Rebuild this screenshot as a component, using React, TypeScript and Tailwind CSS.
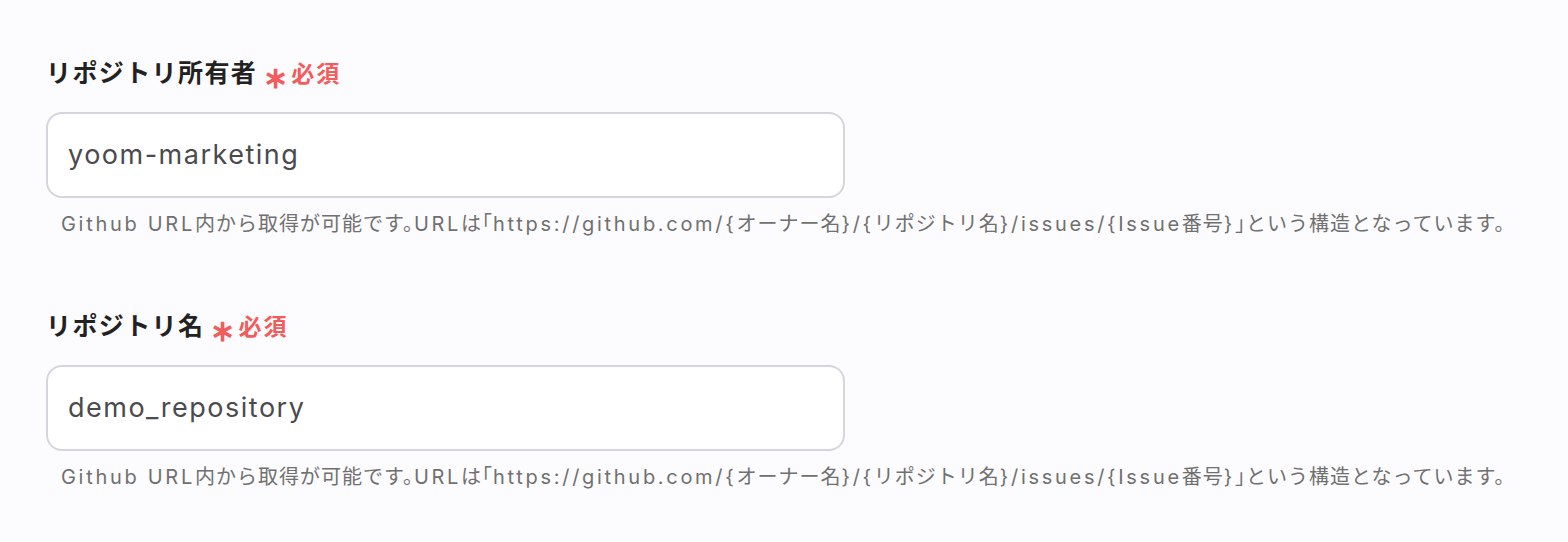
const fontStack = "font-['Inter','Noto_Sans_CJK_JP',sans-serif]";

type FieldProps = {
  label: string;
  value: string;
};

const HELP_TEXT =
  "Github URL内から取得が可能です。URLは「https://github.com/{オーナー名}/{リポジトリ名}/issues/{Issue番号}」という構造となっています。";

// 英数字部分だけ字間を広めにとる
const HelpText = ({ text }: { text: string }): JSX.Element => {
  const parts = text.match(/[\x20-\x7e]+|[^\x20-\x7e]+/g) ?? [];
  return (
    <p className="mt-[14px] pl-[15px] text-[20px] leading-[24px] tracking-[1px] text-[#707070] whitespace-nowrap [font-feature-settings:'halt']">
      {parts.map((part, i) =>
        /^[\x20-\x7e]+$/.test(part) ? (
          <span key={i} className="tracking-[2.7px]">{part}</span>
        ) : (
          <span key={i}>{part}</span>
        )
      )}
    </p>
  );
};

const Field = ({ label, value }: FieldProps): JSX.Element => {
  return (
    <div className="flex flex-col">
      <div className="flex items-center h-[30px]">
        <span className="text-[25px] font-bold text-[#222222] tracking-[1.4px]">{label}</span>
        <span className="ml-[6px] text-[30px] font-bold text-[#f25c5c] leading-none mt-[6px]">∗</span>
        <span className="ml-[3px] text-[23px] font-bold text-[#f25c5c] tracking-[2px]">必須</span>
      </div>
      <div className="mt-[23px] w-[799px] h-[86px] rounded-[16px] border-2 border-[#d6d5dd] bg-white flex items-center px-[20px]">
        <span className="text-[27px] tracking-[1.5px] text-[#4a4a4f]">{value}</span>
      </div>
      <HelpText text={HELP_TEXT} />
    </div>
  );
};

const App = (): JSX.Element => {
  return (
    <div className={`${fontStack} w-[1568px] h-[542px] bg-[#fcfbfd] pl-[46px] pt-[59px] flex flex-col gap-[76px]`}>
      <Field label="リポジトリ所有者" value="yoom-marketing" />
      <Field label="リポジトリ名" value="demo_repository" />
    </div>
  );
};

export default App;
